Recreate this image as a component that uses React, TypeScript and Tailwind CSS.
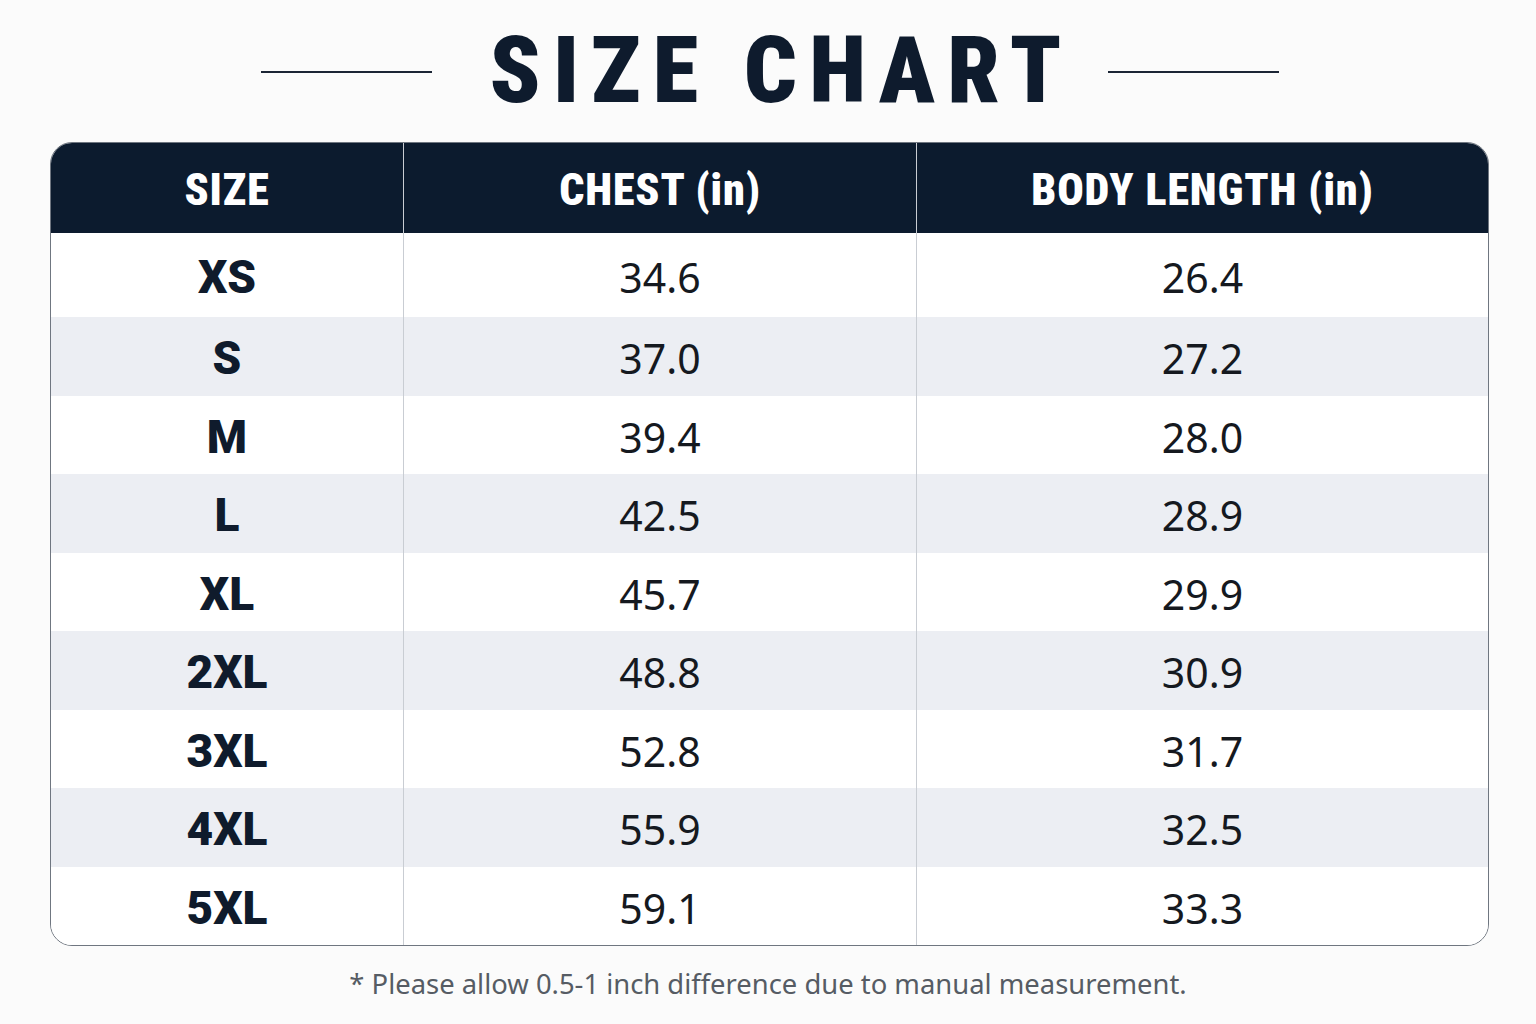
import React from "react";

const rows: [string, string, string][] = [
  ["XS", "34.6", "26.4"],
  ["S", "37.0", "27.2"],
  ["M", "39.4", "28.0"],
  ["L", "42.5", "28.9"],
  ["XL", "45.7", "29.9"],
  ["2XL", "48.8", "30.9"],
  ["3XL", "52.8", "31.7"],
  ["4XL", "55.9", "32.5"],
  ["5XL", "59.1", "33.3"],
];

const condensed =
  "font-['Roboto_Condensed','Liberation_Sans_Narrow','DejaVu_Sans_Condensed','DejaVu_Sans',sans-serif] font-stretch-condensed";

export default function App() {
  return (
    <div className="w-[1536px] h-[1024px] bg-[#fbfbfb] flex flex-col">
      <div className="h-[142px] flex items-center justify-center pl-[4px]">
        <div className="w-[171px] h-[2px] bg-[#1b2535] mr-[58px] mt-[2px]" />
        <h1
          className={`${condensed} text-[93px] leading-none font-black tracking-[0.13em] text-[#0e1b2d] -mt-[2px]`}
        >
          SIZE CHART
        </h1>
        <div className="w-[171px] h-[2px] bg-[#1b2535] ml-[35px] mt-[2px]" />
      </div>

      <div className="mx-[50px] w-[1439px] rounded-[22px] border border-[#6f7680] overflow-hidden bg-white">
        <div className="grid grid-cols-[353px_513px_571px] h-[90px] bg-[#0c1b2e] text-white">
          <div className={`${condensed} flex items-center justify-center pt-[4px] text-[44px] font-black tracking-[0.02em] border-r border-[#c9cdd3]`}>
            SIZE
          </div>
          <div className={`${condensed} flex items-center justify-center pt-[4px] text-[44px] font-black tracking-[0.02em] border-r border-[#c9cdd3]`}>
            CHEST (in)
          </div>
          <div className={`${condensed} flex items-center justify-center pt-[4px] text-[44px] font-black tracking-[0.02em]`}>
            BODY LENGTH (in)
          </div>
        </div>
        {rows.map(([s, c, b], i) => (
          <div
            key={s}
            className={`grid grid-cols-[353px_513px_571px] ${i === 0 ? "h-[84px]" : "h-[78.5px]"} ${i % 2 === 1 ? "bg-[#eceef3]" : "bg-white"}`}
          >
            <div className="flex items-center justify-center pt-[5px] border-r border-[#c9cdd3] font-['Roboto','Inter',sans-serif] font-black text-[46px] text-[#0f1b2c]">
              {s}
            </div>
            <div className="flex items-center justify-center pt-[5px] border-r border-[#c9cdd3] font-['Noto_Sans','Open_Sans',sans-serif] text-[41px] text-[#15191f]">
              {c}
            </div>
            <div className="flex items-center justify-center pt-[5px] font-['Noto_Sans','Open_Sans',sans-serif] text-[41px] text-[#15191f]">
              {b}
            </div>
          </div>
        ))}
      </div>

      <p className="mt-[17px] text-center font-['Noto_Sans','Open_Sans',sans-serif] text-[27.4px] text-[#565c64]">
        * Please allow 0.5-1 inch difference due to manual measurement.
      </p>
    </div>
  );
}
